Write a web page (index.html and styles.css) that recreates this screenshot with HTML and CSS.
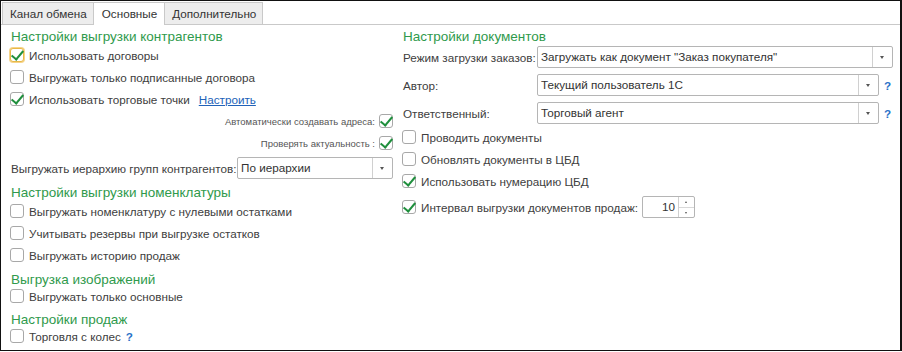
FILE: index.html
```html
<!DOCTYPE html>
<html lang="ru">
<head>
  <meta charset="UTF-8">
  <title>Настройки обмена</title>
  <link rel="stylesheet" href="styles.css">
</head>
<body>
  <div class="frame">
    <!-- вкладки -->
    <div class="tabs">
      <div class="tab">Канал обмена</div>
      <div class="tab active">Основные</div>
      <div class="tab">Дополнительно</div>
    </div>

    <div class="content">
      <!-- левая колонка -->
      <div class="col left">
        <div class="title">Настройки выгрузки контрагентов</div>
        <label class="row"><span class="cb checked focus"></span>Использовать договоры</label>
        <label class="row"><span class="cb"></span>Выгружать только подписанные договора</label>
        <label class="row"><span class="cb checked"></span>Использовать торговые точки <a class="link" href="#">Настроить</a></label>
        <label class="row small">Автоматически создавать адреса:<span class="cb checked"></span></label>
        <label class="row small">Проверять актуальность :<span class="cb checked"></span></label>
        <div class="field hier">
          <span class="lbl">Выгружать иерархию групп контрагентов:</span>
          <div class="select w-hier"><span class="val">По иерархии</span><span class="btn"></span></div>
        </div>

        <div class="title t2">Настройки выгрузки номенклатуры</div>
        <label class="row"><span class="cb"></span>Выгружать номенклатуру с нулевыми остатками</label>
        <label class="row"><span class="cb"></span>Учитывать резервы при выгрузке остатков</label>
        <label class="row"><span class="cb"></span>Выгружать историю продаж</label>

        <div class="title t3">Выгрузка изображений</div>
        <label class="row"><span class="cb"></span>Выгружать только основные</label>

        <div class="title t4">Настройки продаж</div>
        <label class="row"><span class="cb"></span>Торговля с колес <span class="help">?</span></label>
      </div>

      <!-- правая колонка -->
      <div class="col right">
        <div class="title">Настройки документов</div>
        <div class="field">
          <span class="lbl wide">Режим загрузки заказов:</span>
          <div class="select w-full"><span class="val">Загружать как документ "Заказ покупателя"</span><span class="btn"></span></div>
        </div>
        <div class="field">
          <span class="lbl wide">Автор:</span>
          <div class="select w-short"><span class="val">Текущий пользователь 1С</span><span class="btn"></span></div>
          <span class="help">?</span>
        </div>
        <div class="field">
          <span class="lbl wide">Ответственный:</span>
          <div class="select w-short"><span class="val">Торговый агент</span><span class="btn"></span></div>
          <span class="help">?</span>
        </div>
        <label class="row r-first"><span class="cb"></span>Проводить документы</label>
        <label class="row"><span class="cb"></span>Обновлять документы в ЦБД</label>
        <label class="row"><span class="cb checked"></span>Использовать нумерацию ЦБД</label>
        <div class="row spin-row">
          <span class="cb checked"></span>Интервал выгрузки документов продаж:
          <div class="spin"><span class="num">10</span><span class="arrows"><i class="up"></i><i class="down"></i></span></div>
        </div>
      </div>
    </div>
  </div>
</body>
</html>
```

FILE: styles.css
```css
body {
  margin: 0;
  font-family: "Liberation Sans", Arial, sans-serif;
  font-size: 11.7px;
  color: #404040;
}

/* рамка скриншота */
.frame {
  width: 902px;
  height: 351px;
  box-sizing: border-box;
  border: 1px solid #111;
  border-right-width: 2px;
  background: #fff;
}

/* вкладки */
.tabs {
  display: flex;
  padding: 1px 0 0 1px;
  border-bottom: 1px solid #c9c9c9;
  height: 22px;
}

.tab {
  height: 22px;
  line-height: 21px;
  padding: 0 6px 0 7px;
  border: 1px solid #c9c9c9;
  border-bottom: none;
  background: #ededed;
  margin-right: -1px;
  box-sizing: border-box;
  color: #333;
}

.tab.active {
  background: #fff;
  height: 23px;
  padding: 0 7px 0 8px;
}

/* колонки */
.content {
  display: flex;
  padding: 4px 0 0 9px;
}

.col {
  display: flex;
  flex-direction: column;
}

.left {
  width: 383px;
}

.right {
  margin-left: 9px;
  width: 491px;
}

.title {
  font-size: 13.5px;
  line-height: 16px;
  height: 16px;
  color: #2f9a4c;
  padding-left: 1px;
}

.t2 {
  margin-top: 6px;
}

.t3 {
  margin-top: 5px;
  margin-bottom: -2px;
}

.t4 {
  margin-top: 4px;
  margin-bottom: -2px;
}

.row {
  display: flex;
  align-items: center;
  height: 20px;
  margin-bottom: 2px;
  white-space: nowrap;
}

.row.small {
  justify-content: flex-end;
  font-size: 9.5px;
  color: #555;
}

.row.small .cb {
  margin: 0 0 0 4px;
}

/* флажки */
.cb {
  width: 14px;
  height: 14px;
  box-sizing: border-box;
  border: 1px solid #a8a8a8;
  border-radius: 3px;
  background: #fff;
  margin: 0 5px 0 0;
  flex: none;
  position: relative;
}

.cb.checked::after {
  content: "";
  position: absolute;
  left: 3px;
  top: -1px;
  width: 5px;
  height: 10px;
  border-right: 2.4px solid #1f8f3d;
  border-bottom: 2.4px solid #1f8f3d;
  transform: rotate(40deg);
}

.cb.focus {
  border-color: #e9b847;
  box-shadow: 0 0 0 1px #f6d48a;
}

.link {
  color: #2162b8;
  margin-left: 9px;
}

.help {
  color: #2a72c8;
  font-weight: bold;
  margin-left: 5px;
}

/* поля ввода */
.field {
  display: flex;
  align-items: center;
  height: 22px;
  white-space: nowrap;
}

.hier {
  margin-top: 2px;
  justify-content: space-between;
}

.right .field {
  margin-top: 6px;
}

.right .title + .field {
  margin-top: 1px;
}

.lbl {
  padding-left: 1px;
}

.lbl.wide {
  width: 134px;
  flex: none;
}

.select {
  display: flex;
  height: 22px;
  box-sizing: border-box;
  border: 1px solid #b5b5b5;
  border-radius: 2px;
  background: #fff;
  color: #333;
}

.select .val {
  flex: 1;
  line-height: 20px;
  padding-left: 3px;
  overflow: hidden;
}

.select .btn {
  width: 19px;
  border-left: 1px solid #d0d0d0;
  position: relative;
}

.select .btn::after {
  content: "";
  position: absolute;
  left: 7px;
  top: 9px;
  border-left: 2.5px solid transparent;
  border-right: 2.5px solid transparent;
  border-top: 3px solid #555;
}

.w-hier {
  width: 156px;
}

.w-full {
  width: 356px;
}

.w-short {
  width: 342px;
}

.r-first {
  margin-top: 3px;
}

.spin-row {
  height: 22px;
  margin-top: 3px;
}

.spin {
  display: flex;
  width: 53px;
  height: 22px;
  box-sizing: border-box;
  border: 1px solid #b5b5b5;
  border-radius: 2px;
  margin-left: 4px;
}

.spin .num {
  flex: 1;
  text-align: right;
  line-height: 20px;
  padding-right: 3px;
  color: #333;
}

.spin .arrows {
  width: 15px;
  border-left: 1px solid #d0d0d0;
  display: flex;
  flex-direction: column;
}

.spin .arrows i {
  flex: 1;
  position: relative;
}

.spin .arrows i + i {
  border-top: 1px solid #d8d8d8;
}

.spin .arrows i::after {
  content: "";
  position: absolute;
  left: 6px;
  top: 4px;
  border-left: 1.5px solid transparent;
  border-right: 1.5px solid transparent;
}

.spin .arrows .up::after {
  border-bottom: 2px solid #555;
}

.spin .arrows .down::after {
  border-top: 2px solid #555;
}
```
